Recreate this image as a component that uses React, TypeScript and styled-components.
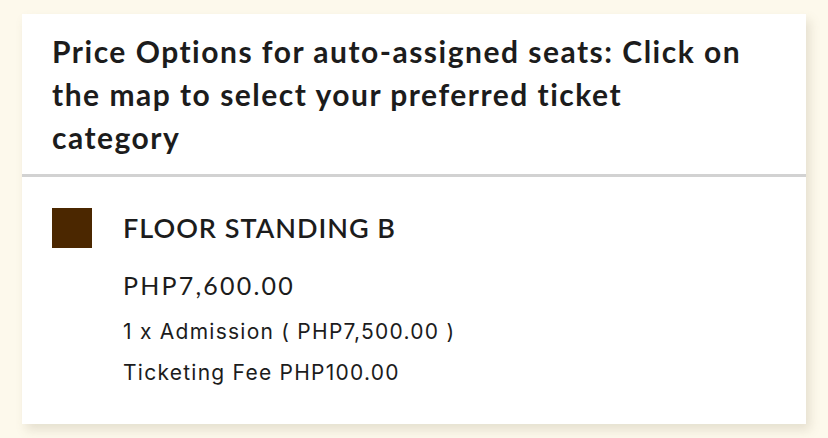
import React from "react";
import styled, { createGlobalStyle } from "styled-components";

const Global = createGlobalStyle`
  html, body {
    margin: 0;
    padding: 0;
    background: #fdf9ec;
  }
  * { box-sizing: border-box; }
`;

const Page = styled.div`
  padding: 14px 22px;
  width: 828px;
  height: 438px;
`;

const Card = styled.section`
  width: 784px;
  height: 410px;
  background: #ffffff;
  box-shadow: 4px 6px 10px rgba(120, 110, 80, 0.18);
  display: flex;
  flex-direction: column;
`;

const Header = styled.header`
  padding: 16px 30px 15px 30px;
  border-bottom: 3px solid #d2d2d2;
`;

const Heading = styled.h2`
  margin: 0;
  max-width: 702px;
  font-family: "Lato", "Noto Sans", sans-serif;
  font-weight: 700;
  font-size: 30px;
  letter-spacing: 1.5px;
  line-height: 43px;
  color: #1c1c1c;
`;

const Option = styled.div`
  display: grid;
  grid-template-columns: 40px 1fr;
  column-gap: 31px;
  align-items: start;
  padding: 31px 30px 0 30px;
`;

const Swatch = styled.div<{ $color: string }>`
  width: 40px;
  height: 40px;
  background: ${(p) => p.$color};
`;

const Details = styled.div`
  display: flex;
  flex-direction: column;
`;

const Category = styled.div`
  font-family: "Lato", "Noto Sans", sans-serif;
  font-weight: 600;
  font-size: 27px;
  letter-spacing: 1px;
  line-height: 40px;
  color: #1c1c1c;
`;

const Price = styled.div`
  margin-top: 22px;
  font-family: "Lato", "Noto Sans", sans-serif;
  font-size: 25px;
  letter-spacing: 2.2px;
  line-height: 30px;
  color: #1c1c1c;
`;

const Breakdown = styled.div`
  margin-top: 11px;
  display: flex;
  flex-direction: column;
`;

const Line = styled.div`
  font-family: "Inter", "Liberation Sans", sans-serif;
  font-size: 21px;
  letter-spacing: 1.25px;
  line-height: 41px;
  color: #1c1c1c;
`;

export default function App() {
  return (
    <>
      <Global />
      <Page>
        <Card>
          <Header>
            <Heading>
              Price Options for auto-assigned seats: Click on the map to select your
              preferred ticket category
            </Heading>
          </Header>
          <Option>
            <Swatch $color="#4b2700" />
            <Details>
              <Category>FLOOR STANDING B</Category>
              <Price>PHP7,600.00</Price>
              <Breakdown>
                <Line>1 x Admission ( PHP7,500.00 )</Line>
                <Line>Ticketing Fee PHP100.00</Line>
              </Breakdown>
            </Details>
          </Option>
        </Card>
      </Page>
    </>
  );
}
